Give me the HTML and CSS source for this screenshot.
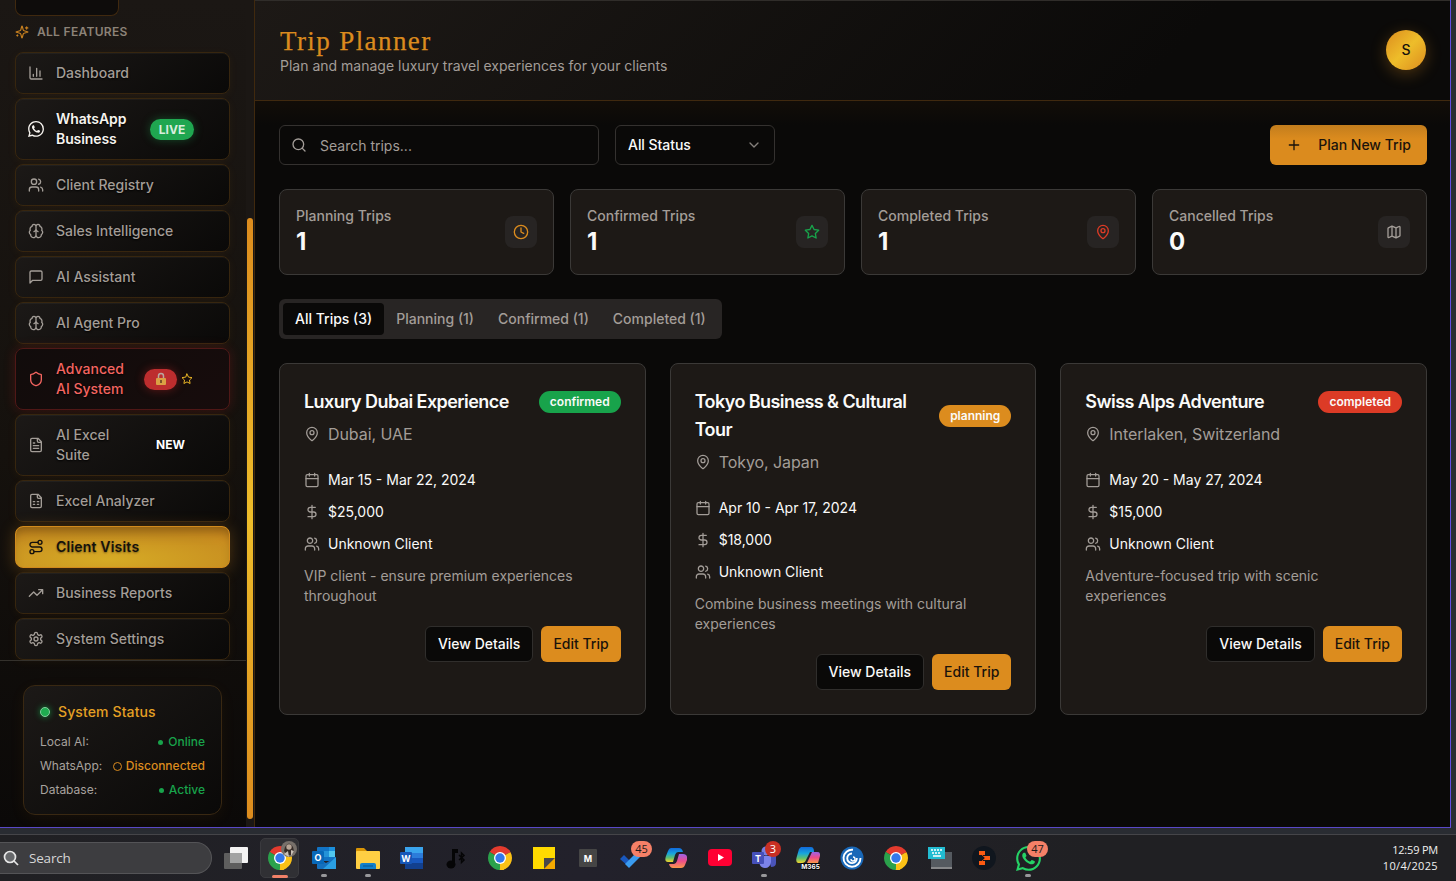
FILE: index.html
```html
<!DOCTYPE html>
<html lang="en">
<head>
<meta charset="utf-8">
<title>Trip Planner</title>
<link rel="stylesheet" href="styles.css">
</head>
<body>
<svg class="sprite" aria-hidden="true">
  <symbol id="sparkles" viewBox="0 0 24 24"><path d="M9.94 15.5A2 2 0 0 0 8.5 14.06l-6.14-1.58a.5.5 0 0 1 0-.96L8.5 9.94A2 2 0 0 0 9.94 8.5l1.58-6.14a.5.5 0 0 1 .96 0L14.06 8.5A2 2 0 0 0 15.5 9.94l6.14 1.58a.5.5 0 0 1 0 .96L15.5 14.06a2 2 0 0 0-1.44 1.44l-1.58 6.14a.5.5 0 0 1-.96 0zM20 3v4M22 5h-4M4 17v2M5 18H3"/></symbol>
  <symbol id="chart" viewBox="0 0 24 24"><path d="M3 3v16a2 2 0 0 0 2 2h16M18 17V9M13 17V5M8 17v-3"/></symbol>
  <symbol id="users" viewBox="0 0 24 24"><path d="M16 21v-2a4 4 0 0 0-4-4H6a4 4 0 0 0-4 4v2M22 21v-2a4 4 0 0 0-3-3.87M16 3.13a4 4 0 0 1 0 7.75"/><circle cx="9" cy="7" r="4"/></symbol>
  <symbol id="brain" viewBox="0 0 24 24"><path d="M12 5a3 3 0 1 0-5.997.125 4 4 0 0 0-2.526 5.77 4 4 0 0 0 .556 6.588A4 4 0 1 0 12 18ZM12 5a3 3 0 1 1 5.997.125 4 4 0 0 1 2.526 5.77 4 4 0 0 1-.556 6.588A4 4 0 1 1 12 18ZM15 13a4.5 4.5 0 0 1-3-4 4.5 4.5 0 0 1-3 4"/></symbol>
  <symbol id="message" viewBox="0 0 24 24"><path d="M21 15a2 2 0 0 1-2 2H7l-4 4V5a2 2 0 0 1 2-2h14a2 2 0 0 1 2 2z"/></symbol>
  <symbol id="shield" viewBox="0 0 24 24"><path d="M20 13c0 5-3.5 7.5-7.66 8.95a1 1 0 0 1-.67-.01C7.5 20.5 4 18 4 13V6a1 1 0 0 1 1-1c2 0 4.5-1.2 6.24-2.72a1.17 1.17 0 0 1 1.52 0C14.51 3.81 17 5 19 5a1 1 0 0 1 1 1z"/></symbol>
  <symbol id="filetext" viewBox="0 0 24 24"><path d="M15 2H6a2 2 0 0 0-2 2v16a2 2 0 0 0 2 2h12a2 2 0 0 0 2-2V7ZM14 2v4a2 2 0 0 0 2 2h4M10 9H8M16 13H8M16 17H8"/></symbol>
  <symbol id="sheet" viewBox="0 0 24 24"><path d="M15 2H6a2 2 0 0 0-2 2v16a2 2 0 0 0 2 2h12a2 2 0 0 0 2-2V7ZM14 2v4a2 2 0 0 0 2 2h4M8 13h2M14 13h2M8 17h2M14 17h2"/></symbol>
  <symbol id="route" viewBox="0 0 24 24"><circle cx="6" cy="19" r="3"/><path d="M9 19h8.5a3.5 3.5 0 0 0 0-7h-11a3.5 3.5 0 0 1 0-7H15"/><circle cx="18" cy="5" r="3"/></symbol>
  <symbol id="trend" viewBox="0 0 24 24"><path d="m22 7-8.5 8.5-5-5L2 17M16 7h6v6"/></symbol>
  <symbol id="gear" viewBox="0 0 24 24"><path d="M12.22 2h-.44a2 2 0 0 0-2 2v.18a2 2 0 0 1-1 1.73l-.43.25a2 2 0 0 1-2 0l-.15-.08a2 2 0 0 0-2.73.73l-.22.38a2 2 0 0 0 .73 2.73l.15.1a2 2 0 0 1 1 1.72v.51a2 2 0 0 1-1 1.74l-.15.09a2 2 0 0 0-.73 2.73l.22.38a2 2 0 0 0 2.73.73l.15-.08a2 2 0 0 1 2 0l.43.25a2 2 0 0 1 1 1.73V20a2 2 0 0 0 2 2h.44a2 2 0 0 0 2-2v-.18a2 2 0 0 1 1-1.73l.43-.25a2 2 0 0 1 2 0l.15.08a2 2 0 0 0 2.73-.73l.22-.39a2 2 0 0 0-.73-2.73l-.15-.08a2 2 0 0 1-1-1.74v-.5a2 2 0 0 1 1-1.74l.15-.09a2 2 0 0 0 .73-2.73l-.22-.38a2 2 0 0 0-2.73-.73l-.15.08a2 2 0 0 1-2 0l-.43-.25a2 2 0 0 1-1-1.73V4a2 2 0 0 0-2-2z"/><circle cx="12" cy="12" r="3"/></symbol>
  <symbol id="whatsapp" viewBox="0 0 24 24"><path d="M17.472 14.382c-.297-.149-1.758-.867-2.03-.967-.273-.099-.471-.148-.67.15-.197.297-.767.966-.94 1.164-.173.199-.347.223-.644.075-.297-.15-1.255-.463-2.39-1.475-.883-.788-1.48-1.761-1.653-2.059-.173-.297-.018-.458.13-.606.134-.133.298-.347.446-.52.149-.174.198-.298.298-.497.099-.198.05-.371-.025-.52-.075-.149-.669-1.612-.916-2.207-.242-.579-.487-.5-.669-.51-.173-.008-.371-.01-.57-.01-.198 0-.52.074-.792.372-.272.297-1.04 1.016-1.04 2.479 0 1.462 1.065 2.875 1.213 3.074.149.198 2.096 3.2 5.077 4.487.709.306 1.262.489 1.694.625.712.227 1.36.195 1.871.118.571-.085 1.758-.719 2.006-1.413.248-.694.248-1.289.173-1.413-.074-.124-.272-.198-.57-.347m-5.421 7.403h-.004a9.87 9.87 0 01-5.031-1.378l-.361-.214-3.741.982.998-3.648-.235-.374a9.86 9.86 0 01-1.51-5.26c.001-5.45 4.436-9.884 9.888-9.884 2.64 0 5.122 1.03 6.988 2.898a9.825 9.825 0 012.893 6.994c-.003 5.45-4.437 9.884-9.885 9.884m8.413-18.297A11.815 11.815 0 0012.05 0C5.495 0 .16 5.335.157 11.892c0 2.096.547 4.142 1.588 5.945L.057 24l6.305-1.654a11.882 11.882 0 005.683 1.448h.005c6.554 0 11.89-5.335 11.893-11.893a11.821 11.821 0 00-3.48-8.413z"/></symbol>
  <symbol id="star" viewBox="0 0 24 24"><path d="m12 2 3.09 6.26L22 9.27l-5 4.87 1.18 6.88L12 17.77l-6.18 3.25L7 14.14 2 9.27l6.91-1.01z"/></symbol>
  <symbol id="search" viewBox="0 0 24 24"><circle cx="11" cy="11" r="8"/><path d="m21 21-4.3-4.3"/></symbol>
  <symbol id="chevron" viewBox="0 0 24 24"><path d="m6 9 6 6 6-6"/></symbol>
  <symbol id="plus" viewBox="0 0 24 24"><path d="M5 12h14M12 5v14"/></symbol>
  <symbol id="clock" viewBox="0 0 24 24"><circle cx="12" cy="12" r="10"/><path d="M12 6v6l4 2"/></symbol>
  <symbol id="pin" viewBox="0 0 24 24"><path d="M20 10c0 4.99-5.54 10.19-7.4 11.8a1 1 0 0 1-1.2 0C9.54 20.19 4 14.99 4 10a8 8 0 0 1 16 0"/><circle cx="12" cy="10" r="3"/></symbol>
  <symbol id="map" viewBox="0 0 24 24"><path d="M14.1 5.55a2 2 0 0 0 1.8 0l3.65-1.83A1 1 0 0 1 21 4.62v12.76a1 1 0 0 1-.55.9l-4.55 2.27a2 2 0 0 1-1.8 0l-4.2-2.1a2 2 0 0 0-1.8 0l-3.65 1.83A1 1 0 0 1 3 19.38V6.62a1 1 0 0 1 .55-.9L8.1 3.45a2 2 0 0 1 1.8 0zM15 5.76v15M9 3.24v15"/></symbol>
  <symbol id="calendar" viewBox="0 0 24 24"><path d="M8 2v4M16 2v4M3 10h18"/><rect x="3" y="4" width="18" height="18" rx="2"/></symbol>
  <symbol id="dollar" viewBox="0 0 24 24"><path d="M12 2v20M17 5H9.500a3.500 3.500 0 0 0 0 7h5a3.500 3.500 0 0 1 0 7H6"/></symbol>
  <symbol id="chrome" viewBox="0 0 24 24"><path fill="#e33b2e" d="M12 12 1.610 6A12 12 0 0 1 22.390 6z"/><path fill="#fbc116" d="M12 12 22.390 6A12 12 0 0 1 12 24z"/><path fill="#2ba24c" d="M12 12 12 24A12 12 0 0 1 1.610 6z"/><path fill="#e33b2e" d="M12 6.500H22.600L21 4 12 2 4 5z"/><path fill="#fbc116" d="M16.800 14.700 11.500 24h4L22 18l1-8-5.500-1z"/><path fill="#2ba24c" d="M7.200 14.700 1.900 5.600 1 10l2 8 7 5 2-5z"/><circle cx="12" cy="12" r="6" fill="#fff"/><circle cx="12" cy="12" r="4.700" fill="#3478ea"/></symbol>
</svg>

<div class="window">
  <aside class="sidebar">
    <div class="side-body">
      <nav class="nav">
        <div class="nav-stub"></div>
        <div class="nav-heading"><svg class="icon i14"><use href="#sparkles"/></svg><span>ALL FEATURES</span></div>
        <div class="nav-list">
          <a class="item"><svg class="icon"><use href="#chart"/></svg><span>Dashboard</span></a>
          <a class="item tall bright"><svg class="icon solid"><use href="#whatsapp"/></svg><span class="label w94">WhatsApp<br>Business</span><b class="live">LIVE</b></a>
          <a class="item"><svg class="icon"><use href="#users"/></svg><span>Client Registry</span></a>
          <a class="item"><svg class="icon"><use href="#brain"/></svg><span>Sales Intelligence</span></a>
          <a class="item"><svg class="icon"><use href="#message"/></svg><span>AI Assistant</span></a>
          <a class="item"><svg class="icon"><use href="#brain"/></svg><span>AI Agent Pro</span></a>
          <a class="item tall danger"><svg class="icon"><use href="#shield"/></svg><span class="label w88">Advanced<br>AI System</span><b class="lock"><svg width="12" height="14" viewBox="0 0 12 14"><path d="M3.500 7V4a2.500 2.500 0 0 1 5 0v3" fill="none" stroke="#b9a7a0" stroke-width="1.500"/><rect x="1" y="6" width="10" height="7" rx="1" fill="#dba044"/><path d="M6 8v3" stroke="#5c3a20" stroke-width="1.500"/></svg></b><svg class="icon i12 gold"><use href="#star"/></svg></a>
          <a class="item tall"><svg class="icon"><use href="#filetext"/></svg><span class="label w101">AI Excel<br>Suite</span><b class="new">NEW</b></a>
          <a class="item"><svg class="icon"><use href="#sheet"/></svg><span>Excel Analyzer</span></a>
          <a class="item active"><svg class="icon"><use href="#route"/></svg><span>Client Visits</span></a>
          <a class="item"><svg class="icon"><use href="#trend"/></svg><span>Business Reports</span></a>
          <a class="item"><svg class="icon"><use href="#gear"/></svg><span>System Settings</span></a>
        </div>
      </nav>
      <div class="side-foot">
        <section class="status">
          <h2><i class="dot"></i><span>System Status</span></h2>
          <p><span>Local AI:</span><span class="ok"><i class="bullet"></i>Online</span></p>
          <p><span>WhatsApp:</span><span class="warn"><i class="ring"></i>Disconnected</span></p>
          <p><span>Database:</span><span class="ok"><i class="bullet"></i>Active</span></p>
        </section>
      </div>
    </div>
    <div class="scroll"><div class="thumb"></div></div>
  </aside>

  <main class="main">
    <header class="header">
      <div><h1>Trip Planner</h1><p>Plan and manage luxury travel experiences for your clients</p></div>
      <div class="avatar">S</div>
    </header>
    <div class="content">
      <div class="toolbar">
        <div class="field"><svg class="icon"><use href="#search"/></svg><span>Search trips...</span></div>
        <div class="select"><span>All Status</span><svg class="icon"><use href="#chevron"/></svg></div>
        <button class="btn primary plan"><svg class="icon"><use href="#plus"/></svg><span>Plan New Trip</span></button>
      </div>
      <div class="stats">
        <div class="stat"><div><p>Planning Trips</p><strong>1</strong></div><span class="tile amber"><svg class="icon"><use href="#clock"/></svg></span></div>
        <div class="stat"><div><p>Confirmed Trips</p><strong>1</strong></div><span class="tile green"><svg class="icon"><use href="#star"/></svg></span></div>
        <div class="stat"><div><p>Completed Trips</p><strong>1</strong></div><span class="tile red"><svg class="icon"><use href="#pin"/></svg></span></div>
        <div class="stat"><div><p>Cancelled Trips</p><strong>0</strong></div><span class="tile"><svg class="icon"><use href="#map"/></svg></span></div>
      </div>
      <div class="tabs"><span class="tab on">All Trips (3)</span><span class="tab">Planning (1)</span><span class="tab">Confirmed (1)</span><span class="tab">Completed (1)</span></div>
      <div class="cards">
        <article class="card">
          <div class="card-top"><h3>Luxury Dubai Experience</h3><b class="pill green-bg">confirmed</b></div>
          <div class="place"><svg class="icon"><use href="#pin"/></svg>Dubai, UAE</div>
          <ul><li><svg class="icon"><use href="#calendar"/></svg>Mar 15 - Mar 22, 2024</li><li><svg class="icon"><use href="#dollar"/></svg>$25,000</li><li><svg class="icon"><use href="#users"/></svg>Unknown Client</li></ul>
          <p class="note">VIP client - ensure premium experiences<br>throughout</p>
          <div class="actions"><button class="btn outline">View Details</button><button class="btn primary">Edit Trip</button></div>
        </article>
        <article class="card">
          <div class="card-top"><h3>Tokyo Business &amp; Cultural<br>Tour</h3><b class="pill amber-bg">planning</b></div>
          <div class="place"><svg class="icon"><use href="#pin"/></svg>Tokyo, Japan</div>
          <ul><li><svg class="icon"><use href="#calendar"/></svg>Apr 10 - Apr 17, 2024</li><li><svg class="icon"><use href="#dollar"/></svg>$18,000</li><li><svg class="icon"><use href="#users"/></svg>Unknown Client</li></ul>
          <p class="note">Combine business meetings with cultural<br>experiences</p>
          <div class="actions"><button class="btn outline">View Details</button><button class="btn primary">Edit Trip</button></div>
        </article>
        <article class="card">
          <div class="card-top"><h3>Swiss Alps Adventure</h3><b class="pill red-bg">completed</b></div>
          <div class="place"><svg class="icon"><use href="#pin"/></svg>Interlaken, Switzerland</div>
          <ul><li><svg class="icon"><use href="#calendar"/></svg>May 20 - May 27, 2024</li><li><svg class="icon"><use href="#dollar"/></svg>$15,000</li><li><svg class="icon"><use href="#users"/></svg>Unknown Client</li></ul>
          <p class="note">Adventure-focused trip with scenic<br>experiences</p>
          <div class="actions"><button class="btn outline">View Details</button><button class="btn primary">Edit Trip</button></div>
        </article>
      </div>
    </div>
  </main>
</div>
<div class="frame"></div>
<footer class="taskbar">
  <div class="tb-search"><svg width="16" height="16" viewBox="0 0 16 16" fill="none" stroke="#e6e6e6" stroke-width="1.700"><circle cx="7" cy="7" r="5.500" fill="#66686b"/><path d="m11 11 4 4"/></svg><span>Search</span></div>
  <div class="apps">
    <span class="app"><svg width="24" height="24" viewBox="0 0 24 24"><rect x="6" y="1" width="18" height="16" rx="1" fill="#f3f3f3"/><rect x="0" y="7" width="18" height="16" rx="1" fill="#5e5e5e"/><path d="M6 7h12v10H6z" fill="#a2a3a3"/></svg></span>
    <span class="app current"><svg width="24" height="24"><use href="#chrome"/></svg><svg class="profile" width="16" height="16" viewBox="0 0 16 16"><circle cx="8" cy="8" r="8" fill="#77706a"/><path d="M4 6q4-7 8 0l1 4-3 4H6l-3-4z" fill="#372d29"/><circle cx="8" cy="6" r="2.700" fill="#b6a596"/><path d="M3 13l4-3 1 6zM10 9l3 1-3 5z" fill="#c9c0b6"/></svg><i class="run"></i></span>
    <span class="app"><svg width="24" height="24" viewBox="0 0 24 24"><rect x="5" y="1" width="18" height="14" rx="1" fill="#1273c4"/><path d="M11 5h6v6h-6z" fill="#2492d8"/><path d="M17 1h6v4h-6z" fill="#1b8fdb"/><path d="M17 5h6v6h-6z" fill="#50c8f0"/><path d="M5 12l9 5 10-6v11a1 1 0 0 1-1 1H6a1 1 0 0 1-1-1z" fill="#1470bd"/><path d="M11 23 24 11v12z" fill="#2a9fe3"/><rect y="5" width="12" height="13" rx="1" fill="#0868b8"/><text x="6" y="15" class="logo">O</text></svg><i class="idle"></i></span>
    <span class="app"><svg width="24" height="24" viewBox="0 0 24 24"><path d="M0 3a1 1 0 0 1 1-1h7l3 3v4H0z" fill="#d99506"/><rect y="5" width="24" height="18" rx="1" fill="#ffcf43"/><path d="M4 23v-4a2 2 0 0 1 2-2h12a2 2 0 0 1 2 2v4z" fill="#127fcb"/><path d="M7 20h10" stroke="#07558f"/></svg><i class="idle"></i></span>
    <span class="app"><svg width="24" height="24" viewBox="0 0 24 24"><path d="M5 1h18v6H5z" fill="#3aa4ed"/><path d="M5 7h18v5H5z" fill="#2c7cda"/><path d="M5 12h18v6H5z" fill="#1858be"/><path d="M5 17h18v6H5z" fill="#12408e"/><rect y="6" width="12" height="12" rx="1" fill="#1757b7"/><text x="6" y="15.500" class="logo">W</text></svg></span>
    <span class="app"><svg width="20" height="22" viewBox="0 0 20 22"><ellipse cx="5" cy="17.500" rx="4.500" ry="4" fill="#050506"/><path d="M6 17V2h6v4H9v11z" fill="#050506"/><path d="m13 8 5 5-2.500 2.500V6L18 8.500 13 13" fill="none" stroke="#050506" stroke-width="1.500"/></svg></span>
    <span class="app"><svg width="24" height="24"><use href="#chrome"/></svg></span>
    <span class="app"><svg width="22" height="22" viewBox="0 0 22 22"><path d="M0 0h22v11l-11 11H0z" fill="#ffda00"/><path d="M11 11h11L11 22z" fill="#49484a"/><path d="M22 11v11H11z" fill="#f4a900"/></svg></span>
    <span class="app"><svg width="18" height="18" viewBox="0 0 18 18"><rect width="18" height="18" rx="1" fill="#454545"/><text x="9" y="12.500" class="logo">M</text></svg></span>
    <span class="app"><svg width="24" height="24" viewBox="0 0 24 24"><path d="m0 13 4-4 6 6-1 6z" fill="#1958be"/><path d="m5 18 13-13 4 4L9 22z" fill="#3a9cf0"/></svg><b class="count peach">45</b></span>
    <span class="app"><svg width="22" height="22" viewBox="0 0 22 22"><defs><linearGradient id="cp1" x2="0" y2="1"><stop stop-color="#1169dc"/><stop offset=".4" stop-color="#18a5dc"/><stop offset=".7" stop-color="#5fc070"/><stop offset="1" stop-color="#f4d329"/></linearGradient><linearGradient id="cp2" x2="0" y2="1"><stop stop-color="#9c62e8"/><stop offset=".5" stop-color="#ed4d8a"/><stop offset="1" stop-color="#fb984a"/></linearGradient></defs><path d="M6 1h8q3 0 4 4H13q-2 0-3 3l-2 7H3q-4 0-2-6l2-5Q4 1 6 1z" fill="url(#cp1)"/><path d="M16 21H8q-3 0-4-4h5q2 0 3-3l2-7h4q5 0 4 6l-2 5q-1 3-4 3z" fill="url(#cp2)"/></svg></span>
    <span class="app"><svg width="24" height="18" viewBox="0 0 24 18"><rect width="24" height="17" rx="4" fill="#ff0033"/><path d="M10 5v7l6-3.500z" fill="#fff"/></svg></span>
    <span class="app"><svg width="24" height="24" viewBox="0 0 24 24"><circle cx="14" cy="5" r="4.500" fill="#777fe3"/><circle cx="21" cy="8" r="3" fill="#5360c4"/><path d="M16 10h8v7q0 4-5 4z" fill="#4a54ba"/><path d="M7 10h12v6q-1 6-6 6t-6-6z" fill="#7c83eb"/><rect y="6" width="12" height="12" rx="1" fill="#4650ba"/><text x="6" y="15.500" class="logo">T</text></svg><b class="count crimson">3</b><i class="idle"></i></span>
    <span class="app"><svg width="24" height="24" viewBox="0 0 24 24"><path d="M5 1h10q3 0 3 5h-4l-4 8q-1 3-4 3H2q-3-1-1-7l2-7z" fill="url(#cp1)"/><path d="M16 6h5q4 0 3 4l-2 7H11z" fill="url(#cp2)"/><rect x="5" y="17" width="19" height="7" fill="#08080a"/><text x="14.500" y="23" class="micro">M365</text></svg></span>
    <span class="app"><svg width="24" height="24" viewBox="0 0 24 24"><circle cx="12" cy="12" r="11.500" fill="#1968b8"/><g fill="none" stroke="#fff" stroke-width="1.900"><path d="M13 3.800a8.500 8.500 0 1 0 7.500 8.200"/><path d="M12 7.500a4.800 4.800 0 1 0 4.800 4.500"/></g><path d="M13 11a2 2 0 1 1-2 2" fill="none" stroke="#fff" stroke-width="1.300"/></svg></span>
    <span class="app"><svg width="24" height="24"><use href="#chrome"/></svg></span>
    <span class="app"><svg width="24" height="24" viewBox="0 0 24 24"><path d="M3 6h21v17H3z" fill="#555a60"/><path d="M3 22h21" stroke="#999" stroke-width="1.500"/><rect y="1" width="17" height="12" fill="#22bcd2"/><path d="M3 4h2m1 0h2m1 0h2m1 0h2M4 7h2m1 0h2m1 0h2M5 10h8" stroke="#fff" stroke-width="1.500"/></svg></span>
    <span class="app"><svg width="24" height="24" viewBox="0 0 24 24"><circle cx="12" cy="12" r="12" fill="#10161e"/><path d="M7 5h6v4H7zM7 15h6v4H7zM12 10h6v4h-6z" fill="#fa5a12"/><path d="m10 9 3 3-3 3" stroke="#b83e0f" fill="none"/></svg></span>
    <span class="app"><svg width="25" height="25" fill="#25d366"><use href="#whatsapp"/></svg><b class="count peach">47</b><i class="idle"></i></span>
  </div>
  <div class="time"><span>12:59 PM</span><span>10/4/2025</span></div>
</footer>
</body>
</html>
```
FILE: styles.css
```css
* { box-sizing: border-box; margin: 0; padding: 0; }
body { width: 1456px; height: 881px; overflow: hidden; background: #2a2d33; color: #fafaf9; font: 14px/20px Inter, "Liberation Sans", sans-serif; }
button { font: inherit; }
ul { list-style: none; }
.sprite { position: absolute; width: 0; height: 0; }
.icon { width: 16px; height: 16px; flex: none; fill: none; stroke: currentColor; stroke-width: 2; stroke-linecap: round; stroke-linejoin: round; }
.icon.solid { fill: currentColor; stroke: none; }
.i14 { width: 14px; height: 14px; }
.i12 { width: 12px; height: 12px; }
.gold { color: #eab526; margin-left: 4px; }

.window { display: flex; width: 1451px; height: 828px; border-right: 1px solid #634de0; border-bottom: 1px solid #5948c8; background: #0a0908; }
.sidebar { display: flex; width: 255px; flex: none; border-right: 1px solid #40290e; background: linear-gradient(180deg, #1b1714 0%, #15110d 55%, #0b0908 100%); }
.side-body { width: 246px; display: flex; flex-direction: column; }
.nav { height: 660px; padding: 0 16px 0 15px; }
.nav-stub { width: 104px; height: 16px; border: 1px solid #40290f; border-top: 0; border-radius: 0 0 8px 8px; background: #0e0c0b; }
.nav-heading { display: flex; align-items: center; gap: 8px; height: 32px; margin-bottom: 4px; color: #8d8378; font-size: 12px; font-weight: 600; letter-spacing: .3px; }
.nav-heading .icon { color: #c9811f; }
.nav-list { display: flex; flex-direction: column; gap: 4px; }
.item { display: flex; align-items: center; gap: 12px; height: 42px; padding: 0 12px; border: 1px solid #37260f; border-radius: 8px; background: linear-gradient(145deg, #1c1917, #0a0908); color: #a39d97; font-weight: 500; box-shadow: 0 2px 10px rgba(222, 141, 29, .06), inset 0 1px 0 rgba(255, 255, 255, .04); text-shadow: 0 1px 2px #000; }
.item.tall { height: 62px; gap: 0; }
.item.tall .label { margin-left: 12px; }
.w94 { width: 94px; }
.w88 { width: 88px; }
.w101 { width: 100px; }
.bright { color: #f6f3ee; font-weight: 600; letter-spacing: -.1px; }
.live { width: 44px; height: 21px; border-radius: 11px; background: #1fa650; color: #d8eddd; font-size: 12px; line-height: 21px; font-weight: 700; letter-spacing: 0; text-align: center; text-shadow: none; box-shadow: 0 0 10px rgba(31, 166, 80, .4); }
.danger { color: #f46560; border-color: #501817; background: linear-gradient(145deg, #110c0b, #170c0c); box-shadow: 0 0 12px rgba(200, 30, 30, .22); }
.lock { display: flex; align-items: center; justify-content: center; width: 33px; height: 21px; border-radius: 11px; background: #bd2d2e; box-shadow: 0 0 10px rgba(210, 40, 40, .4); }
.new { color: #fff; font-size: 12px; font-weight: 700; letter-spacing: 0; }
.active { border-color: #d18a1d; background: radial-gradient(ellipse 100% 100% at 43% 80%, #d6ab25, #c99121 60%, #d3881e); color: #15110c; font-weight: 600; letter-spacing: .2px; box-shadow: 0 2px 16px rgba(222, 141, 29, .3), inset 0 10px 12px -6px rgba(80, 55, 10, .6); text-shadow: 0 1px 2px rgba(0, 0, 0, .4); }
.side-foot { flex: 1; padding: 24px; border-top: 1px solid #34312c; }
.status { width: 199px; height: 130px; padding: 16px; margin-left: -1px; border: 1px solid #392812; border-radius: 12px; background: linear-gradient(145deg, #1c1917, #0a0908); box-shadow: 0 4px 16px rgba(222, 141, 29, .06); }
.status h2 { display: flex; align-items: center; gap: 8px; height: 20px; margin-bottom: 8px; font-size: 14px; font-weight: 500; letter-spacing: .12px; color: #e5a024; }
.dot { width: 10px; height: 10px; border: 1px solid #83cf9d; border-radius: 50%; background: #1fac50; box-shadow: 0 0 6px #168b40; }
.status p { display: flex; justify-content: space-between; height: 24px; align-items: center; margin-bottom: 0; color: #a8a29e; font-size: 12px; line-height: 16px; }
.status p span { display: flex; align-items: center; }
.status .ok { color: #18a34b; font-weight: 500; }
.status .warn { color: #db8b1e; font-weight: 500; }
.bullet { width: 5px; height: 5px; margin-right: 5px; border-radius: 50%; background: #18a34b; }
.ring { width: 9px; height: 9px; margin-right: 4px; border: 1px solid #db8b1e; border-radius: 50%; }
.scroll { width: 8px; background: #1b1714; padding: 218px 1px 8px; }
.thumb { height: 100%; width: 6px; border-radius: 4px; background: linear-gradient(#dc8c1e, #eebd2a 50%, #dc8c1e); }

.main { flex: 1; }
.header { display: flex; align-items: center; justify-content: space-between; height: 101px; padding: 0 24px 2px 25px; border-top: 1px solid #302d2a; border-bottom: 1px solid #40290f; background: linear-gradient(135deg, #1d1916, #0b0a09 75%); }
h1 { color: #db8b1e; font: 400 27px/31px "Liberation Serif", serif; letter-spacing: 1.4px; -webkit-text-stroke: .25px #db8b1e; }
.header p { margin-top: -1px; color: #a39d98; }
.header > div:first-child { padding-top: 3px; }
.avatar { width: 40px; height: 40px; border-radius: 50%; background: linear-gradient(135deg, #dc8c1e, #eebd2a 50%, #dc8c1e); color: #17120c; font-weight: 500; line-height: 40px; text-align: center; box-shadow: 0 4px 16px rgba(222, 141, 29, .3); }
.content { padding: 24px 23px 0 24px; background: linear-gradient(#120d08, #0a0908 24px); }
.toolbar { display: flex; gap: 16px; height: 40px; }
.field, .select { display: flex; align-items: center; height: 40px; border: 1px solid #34312f; border-radius: 6px; background: #0a0908; padding: 0 12px; }
.field { width: 320px; gap: 13px; padding-left: 11px; color: #a39d98; }
.field span { padding-top: 1px; }
.select { width: 160px; justify-content: space-between; font-weight: 500; letter-spacing: -.05px; }
.select .icon { color: #85807b; }
.btn { display: flex; align-items: center; justify-content: center; height: 36px; padding: 0 12px; border-radius: 6px; border: 0; font-weight: 500; }
.primary { background: #dc8c1e; color: #1a130b; }
.outline { border: 1px solid #302e2c; background: #0a0908; color: #fafaf9; }
.plan { height: 40px; width: 157px; margin-left: auto; gap: 16px; padding: 0; background: linear-gradient(#c27d1d, #db8b1e 35%); }
.stats { display: grid; grid-template-columns: repeat(4, 1fr); gap: 16px; margin-top: 24px; }
.stat { display: flex; justify-content: space-between; align-items: center; height: 86px; padding: 0 16px; border: 1px solid #3b3937; border-radius: 8px; background: #1d1916; }
.stat p { color: #a39d98; font-weight: 500; }
.stat strong { display: block; font-size: 24px; line-height: 32px; font-weight: 700; }
.tile { display: flex; align-items: center; justify-content: center; width: 32px; height: 32px; border-radius: 8px; background: #272423; color: #a39d98; }
.amber { color: #dc8c1e; }
.green { color: #18a34b; }
.red { color: #dc3b26; }
.tabs { display: inline-flex; height: 40px; margin-top: 24px; padding: 4px; width: 443px; border-radius: 6px; background: #282524; color: #a39d98; font-weight: 500; vertical-align: top; }
.tab { padding: 6px 12px; border-radius: 4px; }
.on { background: #0a0908; color: #fafaf9; }
.cards { display: grid; grid-template-columns: repeat(3, 1fr); gap: 24px; margin-top: 24px; }
.card { height: 352px; padding: 24px; border: 1px solid #3b3937; border-radius: 8px; background: #1d1916; }
.card-top { display: flex; justify-content: space-between; align-items: center; }
h3 { font-size: 18px; line-height: 28px; font-weight: 600; letter-spacing: -.57px; white-space: nowrap; }
.pill { height: 22px; padding: 0 11px; border-radius: 11px; font-size: 12px; line-height: 21px; font-weight: 600; }
.green-bg { background: #18a34b; }
.amber-bg { background: #dc8c1e; }
.red-bg { background: #dc3b26; }
.place { display: flex; align-items: center; gap: 8px; height: 24px; margin-top: 6px; color: #a39d98; font-size: 16px; letter-spacing: -.07px; }
.card ul { display: flex; flex-direction: column; gap: 12px; margin-top: 24px; }
.card li { display: flex; align-items: center; gap: 8px; }
.card .icon { color: #a39d98; stroke-width: 1.9; }
.note { margin-top: 12px; color: #a39d98; white-space: nowrap; }
.actions { display: flex; justify-content: flex-end; gap: 8px; margin-top: 20px; }

.frame { height: 7px; background: #292c32; border-bottom: 1px solid #454549; }
.taskbar { display: flex; align-items: center; height: 46px; background: linear-gradient(90deg, #202023, #22212b 40%, #202023 75%); }
.tb-search { display: flex; align-items: center; gap: 10px; width: 212px; height: 32px; padding-left: 3px; border: 1px solid #545457; border-left: 0; border-radius: 0 16px 16px 0; background: #3d3d40; color: #d6d6d6; font: 13.5px/20px "Open Sans", "Noto Sans", sans-serif; letter-spacing: -.2px; }
.apps { display: flex; margin-left: 2px; }
.app { position: relative; display: flex; align-items: center; justify-content: center; width: 44px; height: 46px; }
.current::before { content: ""; position: absolute; inset: 3px 3px 3px 2px; border: 1px solid #3a3a3e; border-radius: 5px; background: #303034; z-index: -1; }
.current { z-index: 0; }
.profile { position: absolute; left: 23px; top: 6px; }
.run, .idle { position: absolute; bottom: 3px; left: 14px; width: 16px; height: 3px; border-radius: 2px; background: #f28168; }
.idle { left: 19px; bottom: 4px; width: 6px; background: #98989b; }
.logo { fill: #fff; font: 700 9px Inter, sans-serif; text-anchor: middle; }
.micro { fill: #fff; font: 700 6.5px Inter, sans-serif; text-anchor: middle; }
.count { position: absolute; left: 21px; top: 6px; width: 21px; height: 16px; border-radius: 8px; font: 11px/16px "Open Sans", sans-serif; text-align: center; }
.peach { background: #f58067; color: #231b1a; }
.crimson { left: 23px; width: 16px; background: #c82f23; color: #fff; }
.time { display: flex; flex-direction: column; margin: 0 18px 1px auto; text-align: right; color: #f0f0f0; font: 11px/16px "Open Sans", "Noto Sans", sans-serif; }
.time span:first-child { letter-spacing: -.2px; }
.time span:last-child { letter-spacing: .35px; }
```
